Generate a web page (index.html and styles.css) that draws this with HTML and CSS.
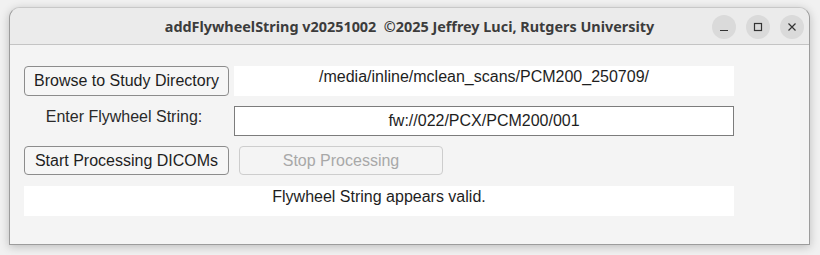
FILE: index.html
```html
<!DOCTYPE html>
<html>
<head>
<meta charset="utf-8">
<link rel="stylesheet" href="styles.css">
</head>
<body>
<div class="window">
  <div class="titlebar">
    <div class="title">addFlywheelString v20251002&nbsp; ©2025 Jeffrey Luci, Rutgers University</div>
    <div class="controls">
      <span class="ctl"><svg width="24" height="24" viewBox="0 0 24 24"><path d="M8 15.5h8" stroke="#333" stroke-width="1.2" fill="none"/></svg></span>
      <span class="ctl"><svg width="24" height="24" viewBox="0 0 24 24"><rect x="8.5" y="8.5" width="7" height="7" stroke="#333" stroke-width="1.2" fill="none"/></svg></span>
      <span class="ctl"><svg width="24" height="24" viewBox="0 0 24 24"><path d="M8.5 8.5l7 7M15.5 8.5l-7 7" stroke="#333" stroke-width="1.2" fill="none"/></svg></span>
    </div>
  </div>
  <div class="content">
    <div class="row">
      <button class="btn">Browse to Study Directory</button>
      <div class="field top">/media/inline/mclean_scans/PCM200_250709/</div>
    </div>
    <div class="row">
      <div class="label">Enter Flywheel String:</div>
      <div class="field input">fw://022/PCX/PCM200/001</div>
    </div>
    <div class="row row3">
      <button class="btn">Start Processing DICOMs</button>
      <button class="btn disabled">Stop Processing</button>
    </div>
    <div class="row">
      <div class="status">Flywheel String appears valid.</div>
    </div>
  </div>
</div>
</body>
</html>
```

FILE: styles.css
```css
html, body {
  margin: 0;
  padding: 0;
}
body {
  width: 820px;
  height: 255px;
  background: #f1f1f1;
  padding: 7px 10px 0 9px;
  box-sizing: border-box;
  font-family: "Liberation Sans", Arial, sans-serif;
  overflow: hidden;
}
.window {
  width: 801px;
  height: 238px;
  box-sizing: border-box;
  border: 1px solid #9c9c9c;
  border-top-color: #c8c8c8;
  border-radius: 11px 11px 0 0;
  background: #f4f4f4;
  box-shadow: 0 2px 10px rgba(0,0,0,0.22);
  overflow: hidden;
}
.titlebar {
  height: 36px;
  background: #ebebeb;
  border-bottom: 1px solid #c4c4c4;
  display: flex;
  align-items: center;
  position: relative;
}
.title {
  flex: 1;
  text-align: center;
  font-family: "Noto Sans", "DejaVu Sans", sans-serif;
  font-weight: 700;
  font-size: 14.4px;
  color: #3c3c3c;
}
.controls {
  position: absolute;
  right: 5px;
  top: 7px;
  display: flex;
  gap: 10px;
}
.ctl {
  width: 24px;
  height: 24px;
  border-radius: 50%;
  background: #dadada;
  display: block;
}
.ctl svg { display: block; }
.content {
  padding: 21px 0 0 14px;
  display: flex;
  flex-direction: column;
  gap: 10px;
}
.row {
  display: flex;
  height: 30px;
  gap: 5px;
}
.row3 { gap: 10px; height: 30px; }
.btn {
  width: 205px;
  height: 30px;
  box-sizing: border-box;
  border: 1px solid #8c8c8c;
  border-radius: 4px;
  background: #f6f6f6;
  font-family: "Liberation Sans", Arial, sans-serif;
  font-size: 16px;
  color: #1e1e1e;
  padding: 0;
  margin: 0;
}
.row3 .btn { height: 29px; }
.btn.disabled {
  width: 204px;
  border-color: #cdcdcd;
  color: #a8a8a8;
  background: #f4f4f4;
}
.label {
  width: 205px;
  text-align: center;
  font-size: 16px;
  color: #2a2a2a;
  line-height: 20px;
  padding-top: 1px;
  padding-right: 5px;
  box-sizing: border-box;
}
.field {
  width: 500px;
  height: 30px;
  box-sizing: border-box;
  background: #ffffff;
  font-size: 16px;
  color: #1e1e1e;
  text-align: center;
}
.field.top {
  line-height: 20px;
  padding-top: 1px;
}
.field.input {
  border: 1px solid #7c7c7c;
  line-height: 28px;
}
.status {
  width: 710px;
  height: 30px;
  background: #ffffff;
  font-size: 16px;
  color: #1e1e1e;
  text-align: center;
  line-height: 20px;
  padding-top: 1px;
  box-sizing: border-box;
}
```
